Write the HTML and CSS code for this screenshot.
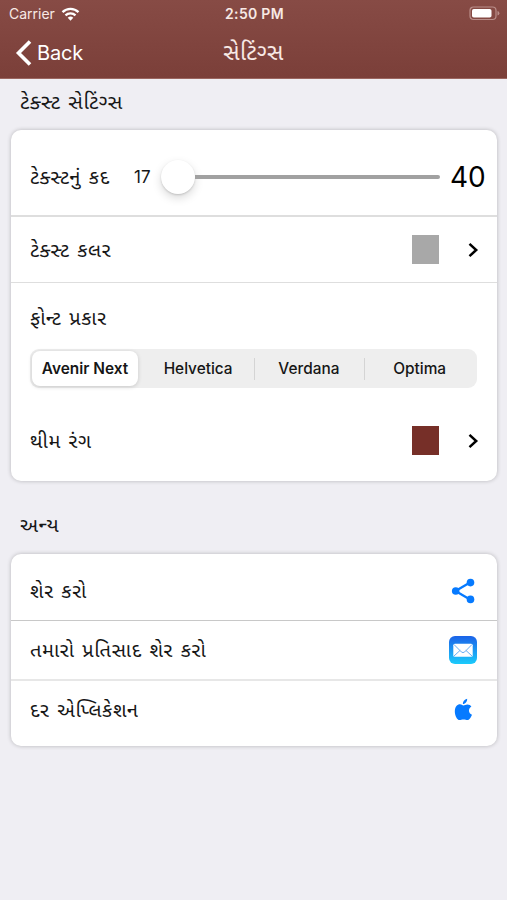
FILE: index.html
```html
<!DOCTYPE html>
<html lang="gu">
<head>
    <meta charset="UTF-8">
    <meta name="viewport" content="width=device-width, initial-scale=1.0">
    <title>સેટિંગ્સ</title>
    <link rel="stylesheet" href="styles.css">
</head>
<body>
    <header class="header">
        <div class="status-bar">
            <div class="carrier">
                <span>Carrier</span>
                <svg class="wifi" viewBox="0 0 18 14" width="19" height="14">
                    <g fill="none" stroke="#fff" stroke-width="2.3">
                        <path d="M1 5.200a11.500 11.500 0 0 1 16 0"/>
                        <path d="M4 8.400a7.200 7.200 0 0 1 10 0"/>
                    </g>
                    <path d="M6.200 10.800a4 4 0 0 1 5.600 0L9 13.700z" fill="#fff"/>
                </svg>
            </div>
            <span class="time">2:50 PM</span>
            <svg class="battery" viewBox="0 0 31 15" width="31" height="15">
                <rect x="1" y="1" width="26" height="12.500" rx="3.500" fill="none" stroke="#b98d89" stroke-width="1.200"/>
                <rect x="3" y="3" width="19.500" height="8.500" rx="1.800" fill="#fff"/>
                <path d="M28.500 5v4.600q1.900-.5 1.900-2.300t-1.900-2.300z" fill="#b98d89"/>
            </svg>
        </div>
        <div class="nav-bar">
            <a class="back" href="#">
                <svg viewBox="0 0 17 28" width="17" height="28">
                    <path d="M15 2.500L3.500 14 15 25.500" fill="none" stroke="#fff" stroke-width="3.600"/>
                </svg>
                <span>Back</span>
            </a>
            <h1>સેટિંગ્સ</h1>
        </div>
    </header>

    <main>
        <h2 class="first-title">ટેક્સ્ટ સેટિંગ્સ</h2>
        <section class="card">
            <div class="row size-row">
                <span class="label size-label">ટેક્સ્ટનું કદ</span>
                <span class="min">17</span>
                <div class="slider">
                    <span class="thumb"></span>
                    <span class="track"></span>
                </div>
                <span class="max">40</span>
            </div>
            <div class="row color-row">
                <span class="label">ટેક્સ્ટ કલર</span>
                <span class="swatch gray"></span>
                <svg class="chevron" viewBox="0 0 11 16" width="11" height="16">
                    <path d="M1.500 1.800L8.200 8l-6.700 6.200" fill="none" stroke="#000" stroke-width="2.500"/>
                </svg>
            </div>
            <div class="font-row">
                <span class="label font-label">ફોન્ટ પ્રકાર</span>
                <div class="segments">
                    <button class="segment active">Avenir Next</button>
                    <button class="segment">Helvetica</button>
                    <button class="segment divided">Verdana</button>
                    <button class="segment divided">Optima</button>
                </div>
            </div>
            <div class="row theme-row">
                <span class="label">થીમ રંગ</span>
                <span class="swatch brown"></span>
                <svg class="chevron" viewBox="0 0 11 16" width="11" height="16">
                    <path d="M1.500 1.800L8.200 8l-6.700 6.200" fill="none" stroke="#000" stroke-width="2.500"/>
                </svg>
            </div>
        </section>

        <h2 class="other-title">અન્ય</h2>
        <section class="card">
            <div class="row share-row">
                <span class="label">શેર કરો</span>
                <svg class="icon" viewBox="0 0 28 28" width="28" height="28">
                    <path d="M21 5.500L6.500 14 21 22.500" fill="none" stroke="#067aff" stroke-width="2.300"/>
                    <g fill="#067aff">
                        <circle cx="21.500" cy="5.600" r="3.800"/>
                        <circle cx="6.700" cy="14" r="3.800"/>
                        <circle cx="21.500" cy="22.400" r="3.800"/>
                    </g>
                </svg>
            </div>
            <div class="row feedback-row">
                <span class="label">તમારો પ્રતિસાદ શેર કરો</span>
                <svg class="icon" viewBox="0 0 28 28" width="28" height="28">
                    <defs>
                        <linearGradient id="mail" x1="0" y1="0" x2="0" y2="1">
                            <stop offset="0" stop-color="#1b62e8"/>
                            <stop offset="1" stop-color="#1bcbfb"/>
                        </linearGradient>
                    </defs>
                    <rect width="28" height="28" rx="6" fill="url(#mail)"/>
                    <rect x="4.300" y="7.800" width="19.400" height="12.900" rx="1.500" fill="#fff"/>
                    <path d="M5 8.500l7.300 7.400q1.700 1.500 3.400 0L23 8.500M5 20l6.200-5.700M23 20l-6.200-5.700" fill="none" stroke="#68adf3" stroke-width="1"/>
                </svg>
            </div>
            <div class="row rate-row">
                <span class="label">દર એપ્લિકેશન</span>
                <svg class="icon" viewBox="1.2 1 25 25" width="28" height="28">
                    <g fill="#067aff">
                        <path d="M14 9.400c1.200 0 2-.9 3.700-.9 1.500 0 2.800.8 3.500 1.900-3.200 1.900-2.700 6.100.5 7.400-.8 2.200-2.300 4.700-3.900 4.700-1.400 0-1.900-.6-3.600-.6s-2.300.6-3.600.6c-2.200 0-4.200-4.200-4.200-7.700 0-4.300 2.300-6.400 4.600-6.400 1.300 0 2.200 1 3 1z"/>
                        <path d="M13.600 8.200c-.2-2.300 1.400-4.400 3.800-4.800.2 2.400-1.400 4.600-3.800 4.800z"/>
                    </g>
                </svg>
            </div>
        </section>
    </main>
</body>
</html>
```

FILE: styles.css
```css
* {
    box-sizing: border-box;
}
body {
    margin: 0;
    min-height: 900px;
    background: #efeef3;
    color: #161616;
    font-family: Inter, "Noto Sans Gujarati", "Noto Sans", sans-serif;
}
.header {
    height: 79px;
    background: linear-gradient(#874b45, #7b3f39);
    border-bottom: 1px solid #9b6660;
    color: #fff;
}
.status-bar {
    display: grid;
    grid-template-columns: 1fr auto 1fr;
    align-items: center;
    height: 27px;
    padding: 0 7px 0 9px;
    font-size: 14px;
    color: #f8e9e5;
}
.carrier {
    display: flex;
    align-items: center;
    gap: 6px;
}
.time {
    font-weight: 600;
    letter-spacing: 0.3px;
}
.battery {
    justify-self: end;
}
.nav-bar {
    display: grid;
    grid-template-columns: 1fr auto 1fr;
    align-items: center;
    height: 51px;
    padding: 0 15px;
}
.back {
    display: flex;
    align-items: center;
    gap: 5px;
    color: #fff;
    font-size: 20px;
    letter-spacing: -0.2px;
    text-decoration: none;
}
h1 {
    margin: 0;
    padding-top: 2px;
    color: #f8e9e5;
    font-size: 23px;
    font-weight: 400;
    letter-spacing: 0.5px;
}
h2 {
    display: flex;
    align-items: center;
    margin: 0;
    padding-left: 20px;
    font-size: 20.5px;
    font-weight: 400;
    letter-spacing: 0.6px;
    word-spacing: 1.5px;
    white-space: nowrap;
}
.first-title {
    height: 51px;
    padding-bottom: 4px;
}
.other-title {
    height: 73px;
    padding-top: 17px;
}
.card {
    margin: 0 10px 0 11px;
    background: #fff;
    border-radius: 10px;
    box-shadow: 0 0 4px rgba(0, 0, 0, 0.24);
}
.row {
    display: flex;
    align-items: center;
    padding: 0 20px 0 19px;
}
.label {
    padding-top: 3px;
    font-size: 20px;
    letter-spacing: 0.6px;
    word-spacing: 1.5px;
    white-space: nowrap;
}
.size-row {
    height: 87px;
    padding: 9px 11px 0 19px;
    border-bottom: 2px solid #dedede;
}
.size-label {
    width: 104px;
}
.min {
    width: 27px;
    font-size: 17px;
}
.slider {
    display: flex;
    align-items: center;
    flex: 1;
}
.thumb {
    width: 34px;
    height: 34px;
    border-radius: 50%;
    background: #fff;
    box-shadow: 0 4px 10px rgba(0, 0, 0, 0.15), 0 1px 2px rgba(0, 0, 0, 0.15);
}
.track {
    flex: 1;
    height: 4px;
    background: #a1a1a1;
    border-radius: 0 2px 2px 0;
}
.max {
    width: 46px;
    padding-left: 10px;
    font-size: 28px;
    color: #000;
}
.color-row {
    height: 66px;
    border-bottom: 1px solid #dedede;
}
.swatch {
    width: 27px;
    height: 29px;
    margin-left: auto;
}
.gray {
    background: #a8a8a8;
}
.brown {
    background: #762f28;
}
.chevron {
    margin-left: 29px;
    margin-right: -2px;
}
.font-row {
    padding: 0 20px 0 19px;
}
.font-label {
    display: flex;
    align-items: center;
    height: 66px;
    padding-top: 6px;
}
.segments {
    display: grid;
    grid-template-columns: repeat(4, 1fr);
    height: 39px;
    padding: 2px;
    background: #eee;
    border-radius: 9px;
}
.segment {
    margin: 0;
    padding: 0;
    border: 0;
    background: none;
    color: #161616;
    font-family: Inter, sans-serif;
    font-size: 15.4px;
    font-weight: 500;
}
.active {
    width: 106px;
    background: #fff;
    border-radius: 8px;
    box-shadow: 0 1px 4px rgba(0, 0, 0, 0.16);
    font-weight: 600;
}
.divided {
    background: linear-gradient(#d4d4d4, #d4d4d4) left center / 1px 22px no-repeat;
}
.theme-row {
    height: 93px;
    padding-top: 12px;
}
.share-row {
    height: 67px;
    padding-top: 7px;
    border-bottom: 1px solid #c8c8c8;
}
.feedback-row {
    height: 60px;
    border-bottom: 2px solid #e7e7e7;
}
.rate-row {
    height: 65px;
    padding-bottom: 7px;
}
.icon {
    margin-left: auto;
}
```
